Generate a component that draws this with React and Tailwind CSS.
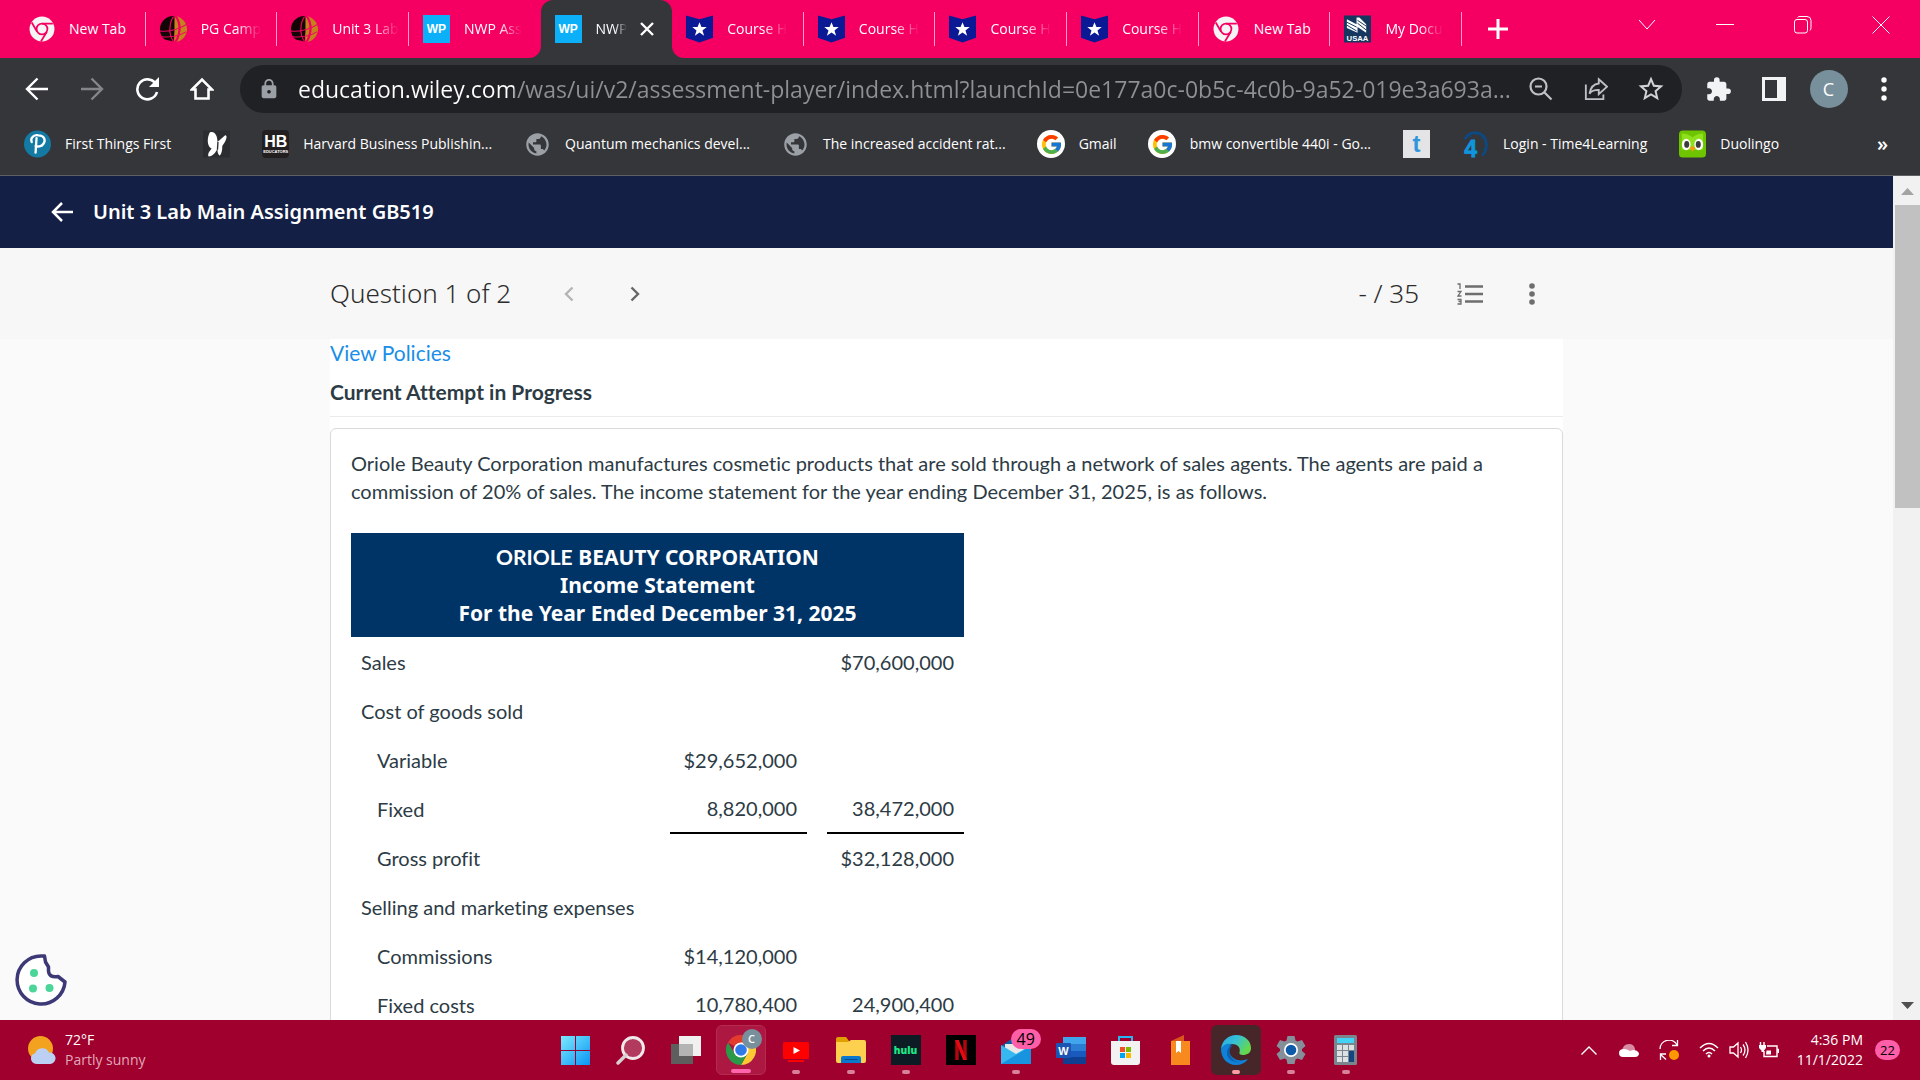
import clsx from 'clsx';
import { FcGoogle } from 'react-icons/fc';
import { MdExtension, MdLock, MdPublic, MdStarBorder } from 'react-icons/md';

const ChromeMono = () => (
    <svg viewBox="0 0 24 24" className="size-[26px]">
        <circle cx="12" cy="12" r="11.5" fill="#f4f4f4" />
        <circle cx="12" cy="12" r="5" fill="none" stroke="#f50062" strokeWidth="1.6" />
        <path d="M12 7h10M16.5 14.5 11 23.5M7.5 14.5 2.5 6" stroke="#f50062" strokeWidth="1.6" fill="none" />
    </svg>
);

const PurdueIcon = () => (
    <svg viewBox="0 0 28 28" className="size-[28px]">
        <path d="M15 0.500C6 0 0 7 0 14c0 5 2 9 5 11l9 2C8 20 9 8 15 0.500z" fill="#120505" />
        <path d="M17 0.500C24 3 28 8 28 14S24 26 17 27.500C22 20 23 8 17 0.500z" fill="#c4821c" />
        <path d="M15 1C21 8 20 20 15 27C15 20 14 10 15 1z" fill="#c4821c" />
        <path d="M15 1C9 8 9 20 14 27L15 16z" fill="#120505" />
        <path d="M0 16c8 1 18-1 28-7M2 22c8 1 16 0 25-5M14 1C9 8 9 20 14 27M17 1c5 6 5 18 0 26" stroke="#f50062" strokeWidth="1.100" fill="none" />
    </svg>
);

const WileyIcon = () => (
    <span className="flex h-7 w-[27px] items-center justify-center bg-[#0cb0f8] font-['Liberation_Sans'] text-xs font-bold text-white">
        WP
    </span>
);

const CourseHeroIcon = () => (
    <svg viewBox="0 0 28 28" className="size-7">
        <path d="M0 0l14 4L28 0v23l-14 5L0 23z" fill="#0b1a94" />
        <path d="M14 7l2 5h5.500l-4.400 3.600 1.700 5.400-4.800-3.300L9.200 21l1.700-5.400L6.500 12H12z" fill="#fff" />
    </svg>
);

const UsaaIcon = () => (
    <svg viewBox="0 0 28 28" className="size-7">
        <path d="M0 0h28v28H0z" fill="#14365f" />
        <path d="M3 4l10 5V2h3l7 7v9l-9-6v6L3 13z" fill="#fff" />
        <path d="M3 7l10 5M3 10l10 6M14 5l9 6M14 8l9 7" stroke="#14365f" strokeWidth="1" />
        <text x="14" y="26.500" fontSize="8" fontWeight="700" textAnchor="middle" fill="#fff" fontFamily="Liberation Sans">USAA</text>
    </svg>
);

const tabs = [
    { title: 'New Tab', icon: ChromeMono, full: true },
    { title: 'PG Camp', icon: PurdueIcon },
    { title: 'Unit 3 Lab', icon: PurdueIcon },
    { title: 'NWP Ass', icon: WileyIcon, last: true },
    { title: 'NWP', icon: WileyIcon, active: true },
    { title: 'Course H', icon: CourseHeroIcon },
    { title: 'Course H', icon: CourseHeroIcon },
    { title: 'Course H', icon: CourseHeroIcon },
    { title: 'Course H', icon: CourseHeroIcon },
    { title: 'New Tab', icon: ChromeMono, full: true },
    { title: 'My Docu', icon: UsaaIcon },
];

const Tab = ({ tab }) => {
    const Icon = tab.icon;
    return (
        <div className={clsx('relative flex min-w-0 flex-1 items-center', tab.active && 'rounded-t-xl bg-[#35363a]')}>
            {tab.active && (
                <>
                    <svg viewBox="0 0 12 12" className="absolute bottom-0 -left-3 size-3"><path d="M12 0v12H0A12 12 0 0 0 12 0z" fill="#35363a" /></svg>
                    <svg viewBox="0 0 12 12" className="absolute -right-3 bottom-0 size-3"><path d="M0 0v12h12A12 12 0 0 1 0 0z" fill="#35363a" /></svg>
                </>
            )}
            <button className="flex min-w-0 flex-1 items-center gap-3.5 pl-3.5 text-left">
                <span className="flex w-[27px] shrink-0 justify-center"><Icon /></span>
                <span
                    className={clsx(
                        'text-sm whitespace-nowrap text-white',
                        !tab.full && '[mask-image:linear-gradient(to_right,black_60%,transparent)]',
                    )}
                >
                    {tab.title}
                </span>
            </button>
            {tab.active ? (
                <button aria-label="Close tab" className="pr-[18px]">
                    <svg viewBox="0 0 14 14" className="size-3.5"><path d="M1 1l12 12M13 1L1 13" stroke="#fff" strokeWidth="2.400" /></svg>
                </button>
            ) : (
                !tab.last && <span className="h-[34px] w-px bg-[#ff9fc4]" />
            )}
        </div>
    );
};

const TabStrip = () => (
    <div className="flex h-[58px] shrink-0 bg-[#f50062] pl-3.5">
        <div className="flex max-w-[1448px] flex-1">
            {tabs.map((tab, i) => <Tab key={i} tab={tab} />)}
        </div>
        <button aria-label="New tab" className="px-[26px]">
            <svg viewBox="0 0 20 20" className="size-5"><path d="M10 0v20M0 10h20" stroke="#fff" strokeWidth="3" /></svg>
        </button>
        <div className="ml-auto flex h-[50px] shrink-0 items-center pr-0 text-white">
            <button aria-label="Search tabs" className="flex w-[78px] justify-center">
                <svg viewBox="0 0 18 18" className="size-[18px]"><path d="M1 4l8 9 8-9" stroke="currentColor" fill="none" /></svg>
            </button>
            <button aria-label="Minimize" className="flex w-[78px] justify-center">
                <svg viewBox="0 0 18 18" className="size-[18px]"><path d="M0 8.500h18" stroke="currentColor" /></svg>
            </button>
            <button aria-label="Restore" className="flex w-[78px] justify-center">
                <svg viewBox="0 0 18 18" className="size-[18px]">
                    <rect x="0.500" y="3.500" width="13" height="13.500" rx="2.500" stroke="currentColor" fill="none" />
                    <path d="M3.500 1.500Q4 0.500 6 0.500h7q4 0 4 4v7q0 2-1 3" stroke="currentColor" fill="none" />
                </svg>
            </button>
            <button aria-label="Close" className="flex w-[78px] justify-center">
                <svg viewBox="0 0 18 18" className="size-[18px]"><path d="M0.500 0.500l17 17M17.500 0.500l-17 17" stroke="currentColor" /></svg>
            </button>
        </div>
    </div>
);

const ToolButton = ({ label, children, className }) => (
    <button aria-label={label} className={clsx('flex w-[55px] shrink-0 justify-center', className)}>
        {children}
    </button>
);

const Toolbar = () => (
    <div className="flex h-[62px] shrink-0 items-center pl-[9px] text-white">
        <ToolButton label="Back">
            <svg viewBox="0 0 24 24" className="size-6" fill="none" stroke="#fff" strokeWidth="2.400"><path d="M23 12H2M12.500 1.500L2 12l10.500 10.500" /></svg>
        </ToolButton>
        <ToolButton label="Forward">
            <svg viewBox="0 0 24 24" className="size-6" fill="none" stroke="#85868a" strokeWidth="2.400"><path d="M1 12h21M11.500 1.500L22 12 11.500 22.500" /></svg>
        </ToolButton>
        <ToolButton label="Reload">
            <svg viewBox="0 0 24 24" className="size-6">
                <path d="M20.500 6.500A10 10 0 1 0 22 15" fill="none" stroke="#fff" strokeWidth="2.600" />
                <path d="M24 0v10H14z" fill="#fff" />
            </svg>
        </ToolButton>
        <ToolButton label="Home">
            <svg viewBox="0 0 24 24" className="size-6" fill="none" stroke="#fff" strokeWidth="2.600"><path d="M2 12.500L12 2.500l10 10h-3.500v9h-13v-9z" /></svg>
        </ToolButton>
        <div className="ml-[11px] flex h-12 min-w-0 flex-1 items-center rounded-full bg-[#202124] pr-1">
            <MdLock className="mx-[18px] size-[22px] shrink-0 text-[#9aa0a6]" />
            <input
                aria-label="Address"
                readOnly
                value="education.wiley.com/was/ui/v2/assessment-player/index.html?launchId=0e177a0c-0b5c-4c0b-9a52-019e3a693a..."
                className="min-w-0 flex-1 bg-[linear-gradient(to_right,#fff_216px,#8e9093_216px)] bg-clip-text text-[23px] text-transparent outline-none"
            />
            <ToolButton label="Zoom">
                <svg viewBox="0 0 24 24" className="size-6" fill="none" stroke="#bdc1c6" strokeWidth="2.200"><circle cx="9.500" cy="9.500" r="8" /><path d="M15.500 15.500l7 7M6 9.500h7" /></svg>
            </ToolButton>
            <ToolButton label="Share">
                <svg viewBox="0 0 26 24" className="size-6" fill="none" stroke="#bdc1c6" strokeWidth="2"><path d="M2 7v16h19v-5" /><path d="M16 1.500L25 9.500l-9 8v-4.500c-5 0-8 1-10 4 1-6 4-10.500 10-11z" /></svg>
            </ToolButton>
            <ToolButton label="Bookmark">
                <MdStarBorder className="size-[30px] text-[#d0d2d5]" />
            </ToolButton>
        </div>
        <ToolButton label="Extensions" className="ml-[9px]"><MdExtension className="size-[27px] text-[#f1f3f4]" /></ToolButton>
        <ToolButton label="Side panel">
            <svg viewBox="0 0 24 24" className="size-6"><path d="M0 0h24v24H0z" fill="#f1f3f4" /><path d="M3 3h12v18H3z" fill="#35363a" /></svg>
        </ToolButton>
        <ToolButton label="Profile">
            <span className="flex size-[38px] items-center justify-center rounded-full bg-[#78909c] text-lg text-white">C</span>
        </ToolButton>
        <ToolButton label="Menu" className="mr-[9px]">
            <svg viewBox="0 0 6 24" className="h-6 w-1.5" fill="#fff"><circle cx="3" cy="3" r="2.700" /><circle cx="3" cy="12" r="2.700" /><circle cx="3" cy="21" r="2.700" /></svg>
        </ToolButton>
    </div>
);

const PearsonIcon = () => (
    <svg viewBox="0 0 28 28" className="size-7">
        <circle cx="14" cy="14" r="14" fill="#137aa3" />
        <path d="M8 12c-2-5 3-8 7-7 6 0 8 5 5 9-2 3-6 3-8 2M13 8l-1 15" fill="none" stroke="#fff" strokeWidth="2.400" strokeLinecap="round" />
    </svg>
);

const ButterflyIcon = () => (
    <svg viewBox="0 0 28 28" className="size-7">
        <path d="M0 0h28v28H0z" fill="#2b2d31" />
        <path d="M7 2c5-2 8 3 8 10l8-7c3 0 1 6-3 11 0 5-1 9-3 10-2-2-2-5-2-7-2 4-5 8-9 8-2-2 1-6 3-8-5-3-5-11-2-17z" fill="#fff" />
        <path d="M15.500 12L15 20" stroke="#2b2d31" strokeWidth="1.400" />
    </svg>
);

const HarvardIcon = () => (
    <span className="flex h-7 w-[27px] flex-col items-center justify-center rounded bg-[#231f20] font-['Liberation_Sans'] font-bold text-white">
        <span className="text-base leading-4">HB</span>
        <span className="text-[4px] leading-1">EDUCATORS</span>
    </span>
);

const GlobeIcon = () => <MdPublic className="size-[29px] text-[#9aa0a6]" />;

const GoogleIcon = () => (
    <span className="flex size-7 shrink-0 items-center justify-center rounded-full bg-white"><FcGoogle className="size-[23px]" /></span>
);

const ThesaurusIcon = () => (
    <span className="flex h-7 w-[27px] items-center justify-center bg-[#e4e4e6] font-['Liberation_Sans'] text-2xl font-bold text-[#2f96dc]">t</span>
);

const TimeIcon = () => (
    <svg viewBox="0 0 28 28" className="size-7">
        <path d="M3 9C7 1 18 0 23 7c4 6 3 14-2 19" fill="none" stroke="#0b4a86" strokeWidth="2.500" />
        <path d="M8 4l1 3M15 2v3M22 6l-2 2M26 13h-3M25 20l-3-1" stroke="#0b4a86" strokeWidth="1.500" />
        <text x="9" y="27" fontSize="24" fontWeight="700" textAnchor="middle" fill="#0f95dd" stroke="#0f95dd" strokeWidth="0.800" fontFamily="Liberation Sans">4</text>
    </svg>
);

const DuolingoIcon = () => (
    <svg viewBox="0 0 28 28" className="size-7">
        <rect width="28" height="28" rx="4" fill="#6fc400" />
        <path d="M3 3q6 0 11 4 5-4 11-4v17H3z" fill="#8fe01c" />
        <ellipse cx="7.500" cy="14.500" rx="4.500" ry="6" fill="#fff" />
        <ellipse cx="20.500" cy="14.500" rx="4.500" ry="6" fill="#fff" />
        <ellipse cx="8" cy="14.500" rx="2.600" ry="3.500" fill="#3c3c3c" />
        <ellipse cx="20" cy="14.500" rx="2.600" ry="3.500" fill="#3c3c3c" />
        <path d="M11 18l3-2 3 2-3 4z" fill="#f59a0e" />
    </svg>
);

const bookmarks = [
    { title: 'First Things First', icon: PearsonIcon },
    { icon: ButterflyIcon, label: 'MSN' },
    { title: 'Harvard Business Publishin...', icon: HarvardIcon },
    { title: 'Quantum mechanics devel...', icon: GlobeIcon },
    { title: 'The increased accident rat...', icon: GlobeIcon },
    { title: 'Gmail', icon: GoogleIcon },
    { title: 'bmw convertible 440i - Go...', icon: GoogleIcon },
    { icon: ThesaurusIcon, label: 'Thesaurus' },
    { title: 'Login - Time4Learning', icon: TimeIcon },
    { title: 'Duolingo', icon: DuolingoIcon },
];

const BookmarksBar = () => (
    <div className="flex h-14 shrink-0 items-center gap-8 border-b border-[#5f6064] pr-8 pb-[7px] pl-6 text-sm text-white">
        {bookmarks.map(({ title, label, icon: Icon }, i) => (
            <a key={i} href="#" aria-label={label} className="flex shrink-0 items-center gap-3.5 whitespace-nowrap">
                <span className="flex w-[27px] shrink-0 justify-center"><Icon /></span>
                {title}
            </a>
        ))}
        <button aria-label="More bookmarks" className="ml-auto text-xl font-semibold">»</button>
    </div>
);

const rows = [
    { label: 'Sales', total: '$70,600,000' },
    { label: 'Cost of goods sold' },
    { label: 'Variable', indent: true, amount: '$29,652,000' },
    { label: 'Fixed', indent: true, amount: '8,820,000', total: '38,472,000', ruled: true },
    { label: 'Gross profit', indent: true, total: '$32,128,000' },
    { label: 'Selling and marketing expenses' },
    { label: 'Commissions', indent: true, amount: '$14,120,000' },
    { label: 'Fixed costs', indent: true, amount: '10,780,400', total: '24,900,400', ruled: true },
];

const IncomeStatement = () => (
    <table className="mt-7 w-[613px] border-collapse">
        <thead>
            <tr>
                <th colSpan={4} className="bg-[#003366] p-2.5 font-['Noto_Sans',sans-serif] text-[21px] leading-7 font-bold text-white">
                    <span className="font-['Lato']">ORIOLE</span> BEAUTY CORPORATION
                    <br />
                    Income Statement
                    <br />
                    For the Year Ended December 31, 2025
                </th>
            </tr>
        </thead>
        <tbody>
            {rows.map((row) => (
                <tr key={row.label} className="h-[49px]">
                    <td className={clsx('pr-2.5', row.indent ? 'pl-[26px]' : 'pl-2.5')}>{row.label}</td>
                    <td className={clsx('w-[137px] pr-2.5 text-right', row.ruled && 'border-b-2 border-black')}>{row.amount}</td>
                    <td className="w-5" />
                    <td className={clsx('w-[137px] pr-2.5 text-right', row.ruled && 'border-b-2 border-black')}>{row.total}</td>
                </tr>
            ))}
        </tbody>
    </table>
);

const Chevron = ({ d, color }) => (
    <svg viewBox="0 0 10 16" className="h-4 w-2.5" fill="none" stroke={color} strokeWidth="2.400"><path d={d} /></svg>
);

const Page = () => (
    <div className="relative flex min-h-0 flex-1 bg-[#fafafa]">
        <main className="min-w-0 flex-1 overflow-hidden font-['Lato',sans-serif] text-xl text-[#2d3b45] [font-variant-ligatures:none]">
            <header className="flex h-[72px] items-center gap-5 bg-[#141f45] pl-[51px] font-['Noto_Sans',sans-serif] text-white">
                <button aria-label="Back to assignments">
                    <svg viewBox="0 0 22 20" className="h-5 w-[22px]" fill="none" stroke="#fff" strokeWidth="2.500"><path d="M22 10H2M11 1L2 10l9 9" /></svg>
                </button>
                <h1 className="text-xl font-semibold">Unit 3 Lab Main Assignment GB519</h1>
            </header>
            <div className="bg-[#f7f7f7] font-['Noto_Sans',sans-serif] text-[26px] font-light text-[#2c2c2c]">
                <div className="mx-auto flex h-[91px] max-w-[1233px] items-center">
                    <h2>Question 1 of 2</h2>
                    <button aria-label="Previous question" className="ml-[53px]"><Chevron d="M8.500 1.500L2 8l6.500 6.500" color="#b4b4b4" /></button>
                    <button aria-label="Next question" className="ml-14"><Chevron d="M1.500 1.500L8 8l-6.500 6.500" color="#666" /></button>
                    <span className="ml-auto">- / 35</span>
                    <button aria-label="Question list" className="ml-[38px]">
                        <svg viewBox="0 0 26 22" className="h-[22px] w-[26px]" fill="none" stroke="#6e6e6e">
                            <path d="M8 3.500h18M8 11h18M8 18.500h18" strokeWidth="2.400" />
                            <path d="M0.500 1H3v5M0.500 8.500H4L1 13h3.500M0.500 16.500H4v2H1.500M4 18.500v2.500H0.500" strokeWidth="1.300" />
                        </svg>
                    </button>
                    <button aria-label="More options" className="mr-7 ml-[46px]">
                        <svg viewBox="0 0 6 22" className="h-[22px] w-1.5" fill="#6e6e6e"><circle cx="3" cy="3" r="2.800" /><circle cx="3" cy="11" r="2.800" /><circle cx="3" cy="19" r="2.800" /></svg>
                    </button>
                </div>
            </div>
            <div className="mx-auto max-w-[1233px] bg-white">
                <div className="border-b border-[#ebebeb] pb-2.5 text-[21px] leading-7">
                    <a href="#" className="block text-[#1a8ee8]">View Policies</a>
                    <h3 className="mt-[11px] font-bold">Current Attempt in Progress</h3>
                </div>
                <section className="mt-[11px] rounded-md border border-[#dadada] p-5 leading-7">
                    <p>
                        Oriole Beauty Corporation manufactures cosmetic products that are sold through a network of sales agents. The agents are
                        paid a commission of 20% of sales. The income statement for the year ending December 31, 2025, is as follows.
                    </p>
                    <IncomeStatement />
                </section>
            </div>
        </main>
        <div className="flex w-[27px] flex-col items-end bg-[#f1f1f1]">
            <svg viewBox="0 0 27 29" className="h-[29px] w-[27px] shrink-0"><path d="M8 19l6.500-7 6.500 7z" fill="#a3a3a3" /></svg>
            <div className="h-[303px] w-[25px] bg-[#c1c1c1]" />
            <svg viewBox="0 0 27 29" className="mt-auto h-[29px] w-[27px] shrink-0"><path d="M8 11h13l-6.500 7z" fill="#505050" /></svg>
        </div>
        <button aria-label="Cookie settings" className="absolute bottom-3.5 left-[15px]">
            <svg viewBox="0 0 52 52" className="size-[52px]">
                <path d="M26 2A24 24 0 1 0 50 28L43 22.500Q34 24 33.500 17V13L30.500 8 29.500 2z" fill="#fff" stroke="#3c3976" strokeWidth="3.500" strokeLinejoin="round" />
                <g fill="#4bd598"><circle cx="19" cy="19" r="4" /><circle cx="18" cy="34.500" r="4" /><circle cx="34.500" cy="34" r="4" /></g>
            </svg>
        </button>
    </div>
);

const WindowsIcon = () => (
    <svg viewBox="0 0 29 29" className="size-[29px]">
        <defs><linearGradient id="win" x1="0" y1="0" x2="1" y2="1"><stop offset="0" stopColor="#7ceafd" /><stop offset="1" stopColor="#0a95f5" /></linearGradient></defs>
        <path d="M0 0h14v14H0zM15 0h14v14H15zM0 15h14v14H0zM15 15h14v14H15z" fill="url(#win)" />
    </svg>
);

const SearchIcon = () => (
    <svg viewBox="0 0 30 30" className="size-[30px]">
        <circle cx="17" cy="13" r="10.500" fill="#b23a5e" stroke="#f0e8ea" strokeWidth="2.800" />
        <path d="M10 20l-8 8" stroke="#d8d0d2" strokeWidth="3.400" strokeLinecap="round" />
    </svg>
);

const TaskViewIcon = () => (
    <svg viewBox="0 0 30 28" className="h-7 w-[30px]">
        <path d="M0 8h22v20H0z" fill="#5e5e5e" />
        <path d="M8 0h22v20H8z" fill="#f0f0f0" />
        <path d="M8 8h14v12H8z" fill="#b4b4b4" />
    </svg>
);

const ChromeIcon = () => (
    <span className="relative">
        <svg viewBox="0 0 30 30" className="size-[30px]">
            <path d="M15 15L2 7.500A15 15 0 0 1 28 7.500z" fill="#e33b2e" />
            <path d="M28 7.500H15l6.500 11L15 30A15 15 0 0 0 28 7.500z" fill="#fcc934" />
            <path d="M2 7.500A15 15 0 0 0 15 30l6.500-11.500L8.500 18.500z" fill="#2a9a48" />
            <circle cx="15" cy="15" r="7.500" fill="#fff" />
            <circle cx="15" cy="15" r="5.800" fill="#3079e8" />
        </svg>
        <span className="absolute -top-1.5 -right-1.5 flex size-5 items-center justify-center rounded-full bg-[#78909c] text-[11px] font-semibold text-white">C</span>
    </span>
);

const YoutubeIcon = () => (
    <svg viewBox="0 0 26 20" className="mt-1 h-5 w-[26px]">
        <rect width="26" height="17" rx="1.500" fill="#fe0000" />
        <path d="M5 18h16v2H5z" fill="#fe0000" />
        <path d="M10.500 5l6.500 3.500-6.500 3.500z" fill="#fff" />
    </svg>
);

const FolderIcon = () => (
    <svg viewBox="0 0 30 26" className="h-[26px] w-[30px]">
        <path d="M0 2a2 2 0 0 1 2-2h8l3 4v5H0z" fill="#e0a100" />
        <path d="M0 5h12l3-2h13a2 2 0 0 1 2 2v19a2 2 0 0 1-2 2H2a2 2 0 0 1-2-2z" fill="#fdd050" />
        <path d="M5 26v-5a2 2 0 0 1 2-2h16a2 2 0 0 1 2 2v5z" fill="#0b78d0" />
        <path d="M8.500 22.500h13" stroke="#074d8c" />
    </svg>
);

const HuluIcon = () => (
    <span className="flex size-[30px] items-center justify-center bg-[#0d1b24] text-[10px] font-extrabold text-[#1ce783]">hulu</span>
);

const NetflixIcon = () => (
    <svg viewBox="0 0 30 30" className="size-[30px]">
        <path d="M0 0h30v30H0z" fill="#000" />
        <path d="M11 5v20M19 5v20" stroke="#b1060f" strokeWidth="3.500" />
        <path d="M9.200 5h3.600l8 20h-3.600z" fill="#e50914" />
    </svg>
);

const MailIcon = () => (
    <span className="relative">
        <svg viewBox="0 0 30 28" className="h-7 w-[30px]">
            <path d="M0 10L15 0l15 10v6H0z" fill="#0a5ea8" />
            <path d="M4 8h22v10H4z" fill="#e8e8e8" />
            <path d="M0 9l15 9 15-9v19H0z" fill="#38b8f0" />
            <path d="M0 28l30-18v18z" fill="#1793df" />
        </svg>
        <span className="absolute -top-[7px] left-2.5 rounded-full bg-[#ff5fa8] px-1.5 text-[16px] leading-5 text-black">49</span>
    </span>
);

const WordIcon = () => (
    <svg viewBox="0 0 30 27" className="h-[27px] w-[30px]">
        <path d="M7 0h23v7H7z" fill="#41a5ee" /><path d="M7 7h23v7H7z" fill="#2b7cd3" /><path d="M7 14h23v6H7z" fill="#185abd" /><path d="M7 20h23v7H7z" fill="#103f91" />
        <rect y="6" width="15" height="15" rx="1" fill="#1b55b4" />
        <text x="7.500" y="17.500" fontSize="11" fontWeight="700" textAnchor="middle" fill="#fff" fontFamily="Liberation Sans">W</text>
    </svg>
);

const StoreIcon = () => (
    <svg viewBox="0 0 29 29" className="size-[29px]">
        <path d="M8 8V1h13v7" fill="none" stroke="#28b5f0" strokeWidth="2" />
        <path d="M0 5h29v21a3 3 0 0 1-3 3H3a3 3 0 0 1-3-3z" fill="#f2f2f2" />
        <path d="M9 11h5v5H9z" fill="#f25022" /><path d="M15 11h5v5h-5z" fill="#7fba00" /><path d="M9 17h5v5H9z" fill="#00a4ef" /><path d="M15 17h5v5h-5z" fill="#ffb900" />
    </svg>
);

const BookIcon = () => (
    <svg viewBox="0 0 19 30" className="h-[30px] w-[19px]">
        <path d="M0 6L13 0v6z" fill="#d9561a" />
        <path d="M0 6h19v24H0z" fill="#f7891f" />
        <path d="M5 6h5v12l-2.500-2L5 18z" fill="#fff" />
    </svg>
);

const EdgeIcon = () => (
    <svg viewBox="0 0 30 30" className="size-[30px]">
        <defs>
            <linearGradient id="edge" x1="0" y1="0" x2="1" y2="0.500"><stop offset="0" stopColor="#29a8e0" /><stop offset="0.500" stopColor="#35c1d8" /><stop offset="1" stopColor="#66d94a" /></linearGradient>
        </defs>
        <path d="M0 14C1 5 8 0 15 0c9 0 15 6 15 13 0 5-4 7-8 7-3 0-4-1-3.500-2.500C20 12 16 9 11 9 6 9 2 11 0 14z" fill="url(#edge)" />
        <path d="M0 14C2 9 7 8 11 9c-3 2-4 6-2 10 3 6 10 8 18 5-3 4-7 6-12 6C6 30 0 23 0 14z" fill="#0f82d8" />
        <path d="M12 10c-4 3-4 8-2 12 2 3 5 5 9 5-5 1-13-2-13-9 0-4 2-7 6-8z" fill="#0b5fb0" />
    </svg>
);

const SettingsIcon = () => (
    <svg viewBox="0 0 30 30" className="size-[30px]">
        <path d="M11.500 1h7l1 4.500 2 1 4.500-1.500 3.500 6-3.500 3v2l3.500 3-3.500 6-4.500-1.500-2 1-1 4.500h-7l-1-4.500-2-1L4 25 .5 19 4 16v-2L.5 11 4 5l4.500 1.500 2-1z" fill="#858f99" />
        <circle cx="15" cy="15" r="7" fill="#fff" />
        <circle cx="15" cy="15" r="5.300" fill="#0c5bab" />
    </svg>
);

const CalculatorIcon = () => (
    <svg viewBox="0 0 23 30" className="h-[30px] w-[23px]">
        <rect width="23" height="30" rx="1.500" fill="#7b858e" />
        <path d="M3 3h17v5H3z" fill="#42d3f7" />
        <path d="M3 10h5v5H3zM9 10h5v5H9zM15 10h5v5h-5zM3 16h5v5H3zM9 16h5v5H9zM3 22h5v5H3zM9 22h5v5H9z" fill="#dde1e4" />
        <path d="M15 16h5v11h-5z" fill="#14457f" />
    </svg>
);

const apps = [
    { name: 'Start', icon: WindowsIcon },
    { name: 'Search', icon: SearchIcon },
    { name: 'Task view', icon: TaskViewIcon },
    { name: 'Chrome', icon: ChromeIcon, tile: 'bg-[#ad1843] border border-[#b42a51]', mark: 'w-5 bg-[#ff64ad]' },
    { name: 'YouTube', icon: YoutubeIcon, mark: 'w-2 bg-[#d8819b]' },
    { name: 'File Explorer', icon: FolderIcon, mark: 'w-2 bg-[#d8819b]' },
    { name: 'Hulu', icon: HuluIcon, mark: 'w-2 bg-[#d8819b]' },
    { name: 'Netflix', icon: NetflixIcon },
    { name: 'Mail', icon: MailIcon, mark: 'w-2 bg-[#d8819b]' },
    { name: 'Word', icon: WordIcon },
    { name: 'Microsoft Store', icon: StoreIcon },
    { name: 'Books', icon: BookIcon },
    { name: 'Edge', icon: EdgeIcon, tile: 'bg-[#462629]', mark: 'w-2 bg-[#ff9ba4]' },
    { name: 'Settings', icon: SettingsIcon, mark: 'w-2 bg-[#d8819b]' },
    { name: 'Calculator', icon: CalculatorIcon, mark: 'w-2 bg-[#d8819b]' },
];

const Taskbar = () => (
    <footer className="grid h-[60px] shrink-0 grid-cols-[1fr_auto_1fr] items-center bg-[#a0002e] text-sm leading-5 text-white">
        <button className="flex items-center gap-[9px] pl-7 text-left">
            <svg viewBox="0 0 28 28" className="size-7">
                <circle cx="12.500" cy="12.500" r="12.500" fill="#f3a21f" />
                <path d="M3 22a5 5 0 0 1 4-4.500 7.500 7.500 0 0 1 14-1A5.500 5.500 0 0 1 22.500 28h-14A5.500 5.500 0 0 1 3 22z" fill="#bcd0f4" />
            </svg>
            <span>
                <span className="block">72°F</span>
                <span className="block text-[#e0a9b8]">Partly sunny</span>
            </span>
        </button>
        <nav className="flex pl-px">
            {apps.map(({ name, icon: Icon, tile, mark }) => (
                <div key={name} className="flex w-[55px] justify-center">
                    <button aria-label={name} className={clsx('relative flex size-[50px] items-center justify-center rounded-md', tile)}>
                        <Icon />
                        {mark && <span className={clsx('absolute bottom-px h-1 rounded-full', mark)} />}
                    </button>
                </div>
            ))}
        </nav>
        <div className="flex items-center justify-end pr-5">
            <button aria-label="Hidden icons" className="w-10">
                <svg viewBox="0 0 16 9" className="mx-auto h-[9px] w-4" fill="none" stroke="#fff" strokeWidth="1.400"><path d="M0.500 8.500L8 1l7.500 7.500" /></svg>
            </button>
            <button aria-label="OneDrive" className="w-10">
                <svg viewBox="0 0 20 13" className="mx-auto h-[13px] w-5"><path d="M3 7Q4 0 10 0q5 0 6 5v5H3z" fill="#d98ba3" /><path d="M0 9q0-4 5-4 3 0 6 2 6-3 9 2 0 4-4 4H4Q0 13 0 9z" fill="#fff" /></svg>
            </button>
            <button aria-label="Updates" className="w-10">
                <svg viewBox="0 0 20 20" className="mx-auto size-5" fill="none" stroke="#fff" strokeWidth="1.300"><path d="M1 9a9 9 0 0 1 17-4M18.500 0v5.500H13M7 19.500l-5.500-5M1.500 20v-6H7" /><circle cx="15" cy="15" r="5" fill="#fe9800" stroke="none" /></svg>
            </button>
            <button aria-label="Network, sound and battery" className="flex w-[100px] items-center justify-center gap-2.5">
                <svg viewBox="0 0 20 16" className="h-4 w-5" fill="none" stroke="#fff" strokeWidth="1.500"><path d="M1 6Q10-3 19 6M4 9q6-6 12 0M7 12q3-3 6 0" /><circle cx="10" cy="14" r="1.500" fill="#fff" stroke="none" /></svg>
                <svg viewBox="0 0 20 18" className="h-[18px] w-5" fill="none" stroke="#fff" strokeWidth="1.300"><path d="M1 6h3.500L9 2v14l-4.500-4H1zM11.500 6q2 3 0 6M14 3.500q4 5.500 0 11M16.500 1q5 8 0 16" /></svg>
                <svg viewBox="0 0 20 16" className="h-4 w-5" fill="none" stroke="#fff" strokeWidth="1.400"><path d="M8 4h10v10.500H5V9M18 7.500h1.500v3.500" /><path d="M1.500 0v3M5 0v3" /><path d="M0 3h7v3L5 8.500V10H2.500V8.500L0 6zM7.500 8.500H12v4H7z" fill="#fff" stroke="none" /></svg>
            </button>
            <button className="ml-2 text-right whitespace-nowrap">
                <span className="block">4:36 PM</span>
                <span className="block">11/1/2022</span>
            </button>
            <span className="ml-3 flex h-5 w-[25px] items-center justify-center rounded-full bg-[#ff5fa8] text-[13px] text-black">22</span>
        </div>
    </footer>
);

export default function App() {
    return (
        <div className="flex h-screen flex-col overflow-hidden bg-[#35363a] font-['Open_Sans','Noto_Sans',sans-serif]">
            <TabStrip />
            <Toolbar />
            <BookmarksBar />
            <Page />
            <Taskbar />
        </div>
    );
}
